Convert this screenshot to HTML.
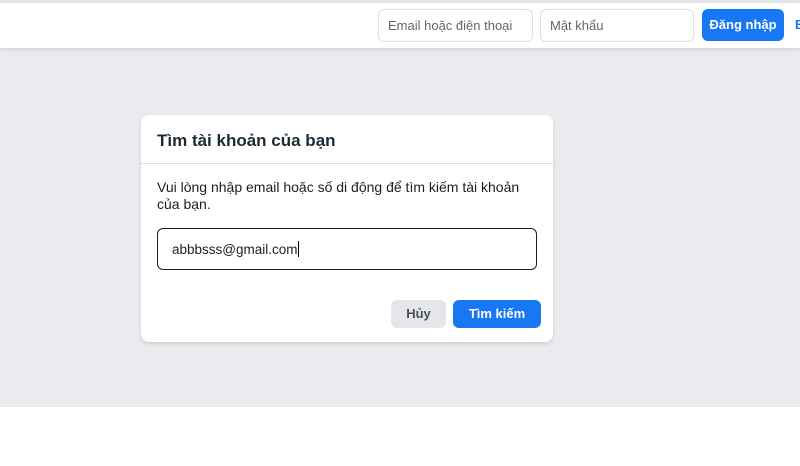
<!DOCTYPE html>
<html><head><meta charset="utf-8"><style>
*{box-sizing:border-box;margin:0;padding:0}
body{width:800px;height:466px;overflow:hidden;background:#fff;font-family:"Liberation Sans",Arial,sans-serif;position:relative}
.topline{position:absolute;left:0;top:0;width:800px;height:3px;background:#e4e6ea}
.header{position:absolute;left:0;top:3px;width:800px;height:45px;background:#fff;box-shadow:0 2px 4px rgba(0,0,0,.1);z-index:2}
.main{position:absolute;left:0;top:48px;width:800px;height:359px;background:#e9ebee}
.hin{position:absolute;top:9px;height:33px;border:1px solid #dddfe2;border-radius:6px;background:#fff;font-size:13px;color:#606770;padding:8px 0 0 9px}
.login{position:absolute;left:702px;top:9px;width:82px;height:32px;background:#1877f2;border-radius:6px;color:#fff;font-weight:bold;font-size:13px;text-align:center;line-height:31px}
.b{position:absolute;left:795px;top:17px;color:#1877f2;font-weight:bold;font-size:13px}
.card{position:absolute;left:141px;top:115px;width:412px;height:227px;background:#fff;border-radius:8px;box-shadow:0 2px 4px rgba(0,0,0,.12)}
.title{position:absolute;left:16px;top:16px;font-size:17px;font-weight:bold;color:#1c2b33}
.div{position:absolute;left:0;top:48px;width:412px;height:1px;background:#dddfe2}
.txt{position:absolute;left:16px;top:64px;width:380px;font-size:14px;line-height:17px;color:#1c1e21}
.inp{position:absolute;left:16px;top:113px;width:380px;height:42px;border:1px solid #1c1e21;border-radius:6px;font-size:13.5px;color:#1c1e21;padding:12px 0 0 14px}
.caret{display:inline-block;width:1px;height:16px;background:#000;vertical-align:-3px}
.cancel{position:absolute;left:250px;top:185px;width:55px;height:28px;background:#e4e6eb;border-radius:6px;color:#4b4f56;font-weight:bold;font-size:13px;text-align:center;line-height:28px}
.search{position:absolute;left:312px;top:185px;width:88px;height:28px;background:#1877f2;border-radius:6px;color:#fff;font-weight:bold;font-size:13px;text-align:center;line-height:28px}
</style></head><body>
<div class="topline"></div>
<div class="header">
<div class="hin" style="left:378px;width:155px;top:6px">Email hoặc điện thoại</div>
<div class="hin" style="left:540px;width:154px;top:6px">Mật khẩu</div>
<div class="login" style="top:6px">Đăng nhập</div>
<div class="b" style="top:14px">B</div>
</div>
<div class="main">
</div>
<div class="card">
<div class="title">Tìm tài khoản của bạn</div>
<div class="div"></div>
<div class="txt">Vui lòng nhập email hoặc số di động để tìm kiếm tài khoản của bạn.</div>
<div class="inp">abbbsss@gmail.com<span class="caret"></span></div>
<div class="cancel">Hủy</div>
<div class="search">Tìm kiếm</div>
</div>
</body></html>
